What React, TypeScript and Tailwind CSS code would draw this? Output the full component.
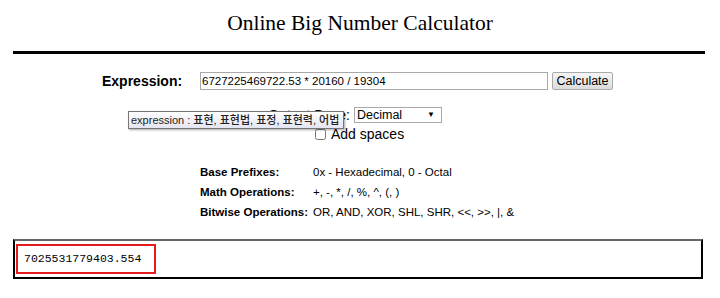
import { useState } from 'react';

const rows = [
    { label: 'Base Prefixes:', value: '0x - Hexadecimal, 0 - Octal' },
    { label: 'Math Operations:', value: '+, -, *, /, %, ^, (, )' },
    { label: 'Bitwise Operations:', value: 'OR, AND, XOR, SHL, SHR, <<, >>, |, &' },
];

export default function App() {
    const [expr, setExpr] = useState('6727225469722.53 * 20160 / 19304');
    const [base, setBase] = useState('Decimal');
    const [spaces, setSpaces] = useState(false);

    return (
        <div className="w-[720px] h-[298px] bg-white text-black font-['Liberation_Sans',Arial,sans-serif] overflow-hidden">
            {/* Title */}
            <h1 className="pt-[9px] h-[51px] text-center text-[21.5px] leading-[28px] font-['Liberation_Serif','Times_New_Roman',serif] font-normal">
                Online Big Number Calculator
            </h1>
            <div className="ml-[13px] w-[692px] h-[3px] bg-black" />

            {/* Form */}
            <div className="relative pt-[18px]">
                <div className="flex items-center h-[18px]">
                    <label className="w-[180px] pl-[102px] text-[14px] font-bold">Expression:</label>
                    <input
                        value={expr}
                        onChange={(e) => setExpr(e.target.value)}
                        className="ml-[20px] w-[348px] h-[18px] border border-[#a9a9a9] px-[1px] text-[11.5px] outline-none"
                    />
                    <button className="ml-[4px] w-[61px] h-[18px] border border-[#aaa] rounded-[2px] bg-gradient-to-b from-[#f6f6f6] to-[#dcdcdc] text-[12.5px] leading-none">
                        Calculate
                    </button>
                </div>

                <div className="flex items-center h-[16px] mt-[17px]">
                    <span className="w-[354px] pr-[4px] text-right text-[14px]">Output Base:</span>
                    <select
                        value={base}
                        onChange={(e) => setBase(e.target.value)}
                        className="w-[88px] h-[16px] border border-[#a9a9a9] text-[12.5px] pl-[2px] leading-none appearance-none bg-white"
                    >
                        <option>Decimal</option>
                        <option>Hexadecimal</option>
                        <option>Octal</option>
                        <option>Binary</option>
                    </select>
                    <span className="-ml-[15px] text-[8px] pointer-events-none">▼</span>
                </div>

                <div className="flex items-center h-[16px] mt-[3px] pl-[315px]">
                    <input
                        type="checkbox"
                        checked={spaces}
                        onChange={(e) => setSpaces(e.target.checked)}
                        className="w-[11px] h-[11px] m-0 accent-gray-400"
                    />
                    <span className="ml-[5px] text-[14px] leading-none">Add spaces</span>
                </div>

                {/* Tooltip */}
                <div className="absolute left-[128px] top-[57px] h-[18px] w-[216px] px-[2px] border border-[#767676] bg-gradient-to-b from-white to-[#e4e5f0] shadow-[1px_1px_2px_rgba(0,0,0,0.35)] text-[11px] leading-[16px] font-medium text-[#222] whitespace-nowrap overflow-hidden font-['Liberation_Sans','Noto_Sans_CJK_KR',sans-serif]">
                    expression : 표현, 표현법, 표정, 표현력, 어법
                </div>

                {/* Reference */}
                <div className="mt-[21px] pl-[200px] flex flex-col">
                    {rows.map((r) => (
                        <div key={r.label} className="flex items-center h-[20px] text-[11.5px]">
                            <span className="w-[113px] font-bold">{r.label}</span>
                            <span>{r.value}</span>
                        </div>
                    ))}
                </div>
            </div>

            {/* Result */}
            <div className="ml-[13px] mt-[16px] w-[690px] h-[40px] border-2 border-black border-t-[#666] flex items-center">
                <div className="ml-[1px] h-[30px] w-[140px] border-2 border-[#e51b1b] flex items-center pl-[6px] text-[11.5px] font-['Liberation_Mono','Courier_New',monospace]">
                    7025531779403.554
                </div>
            </div>
        </div>
    );
}
